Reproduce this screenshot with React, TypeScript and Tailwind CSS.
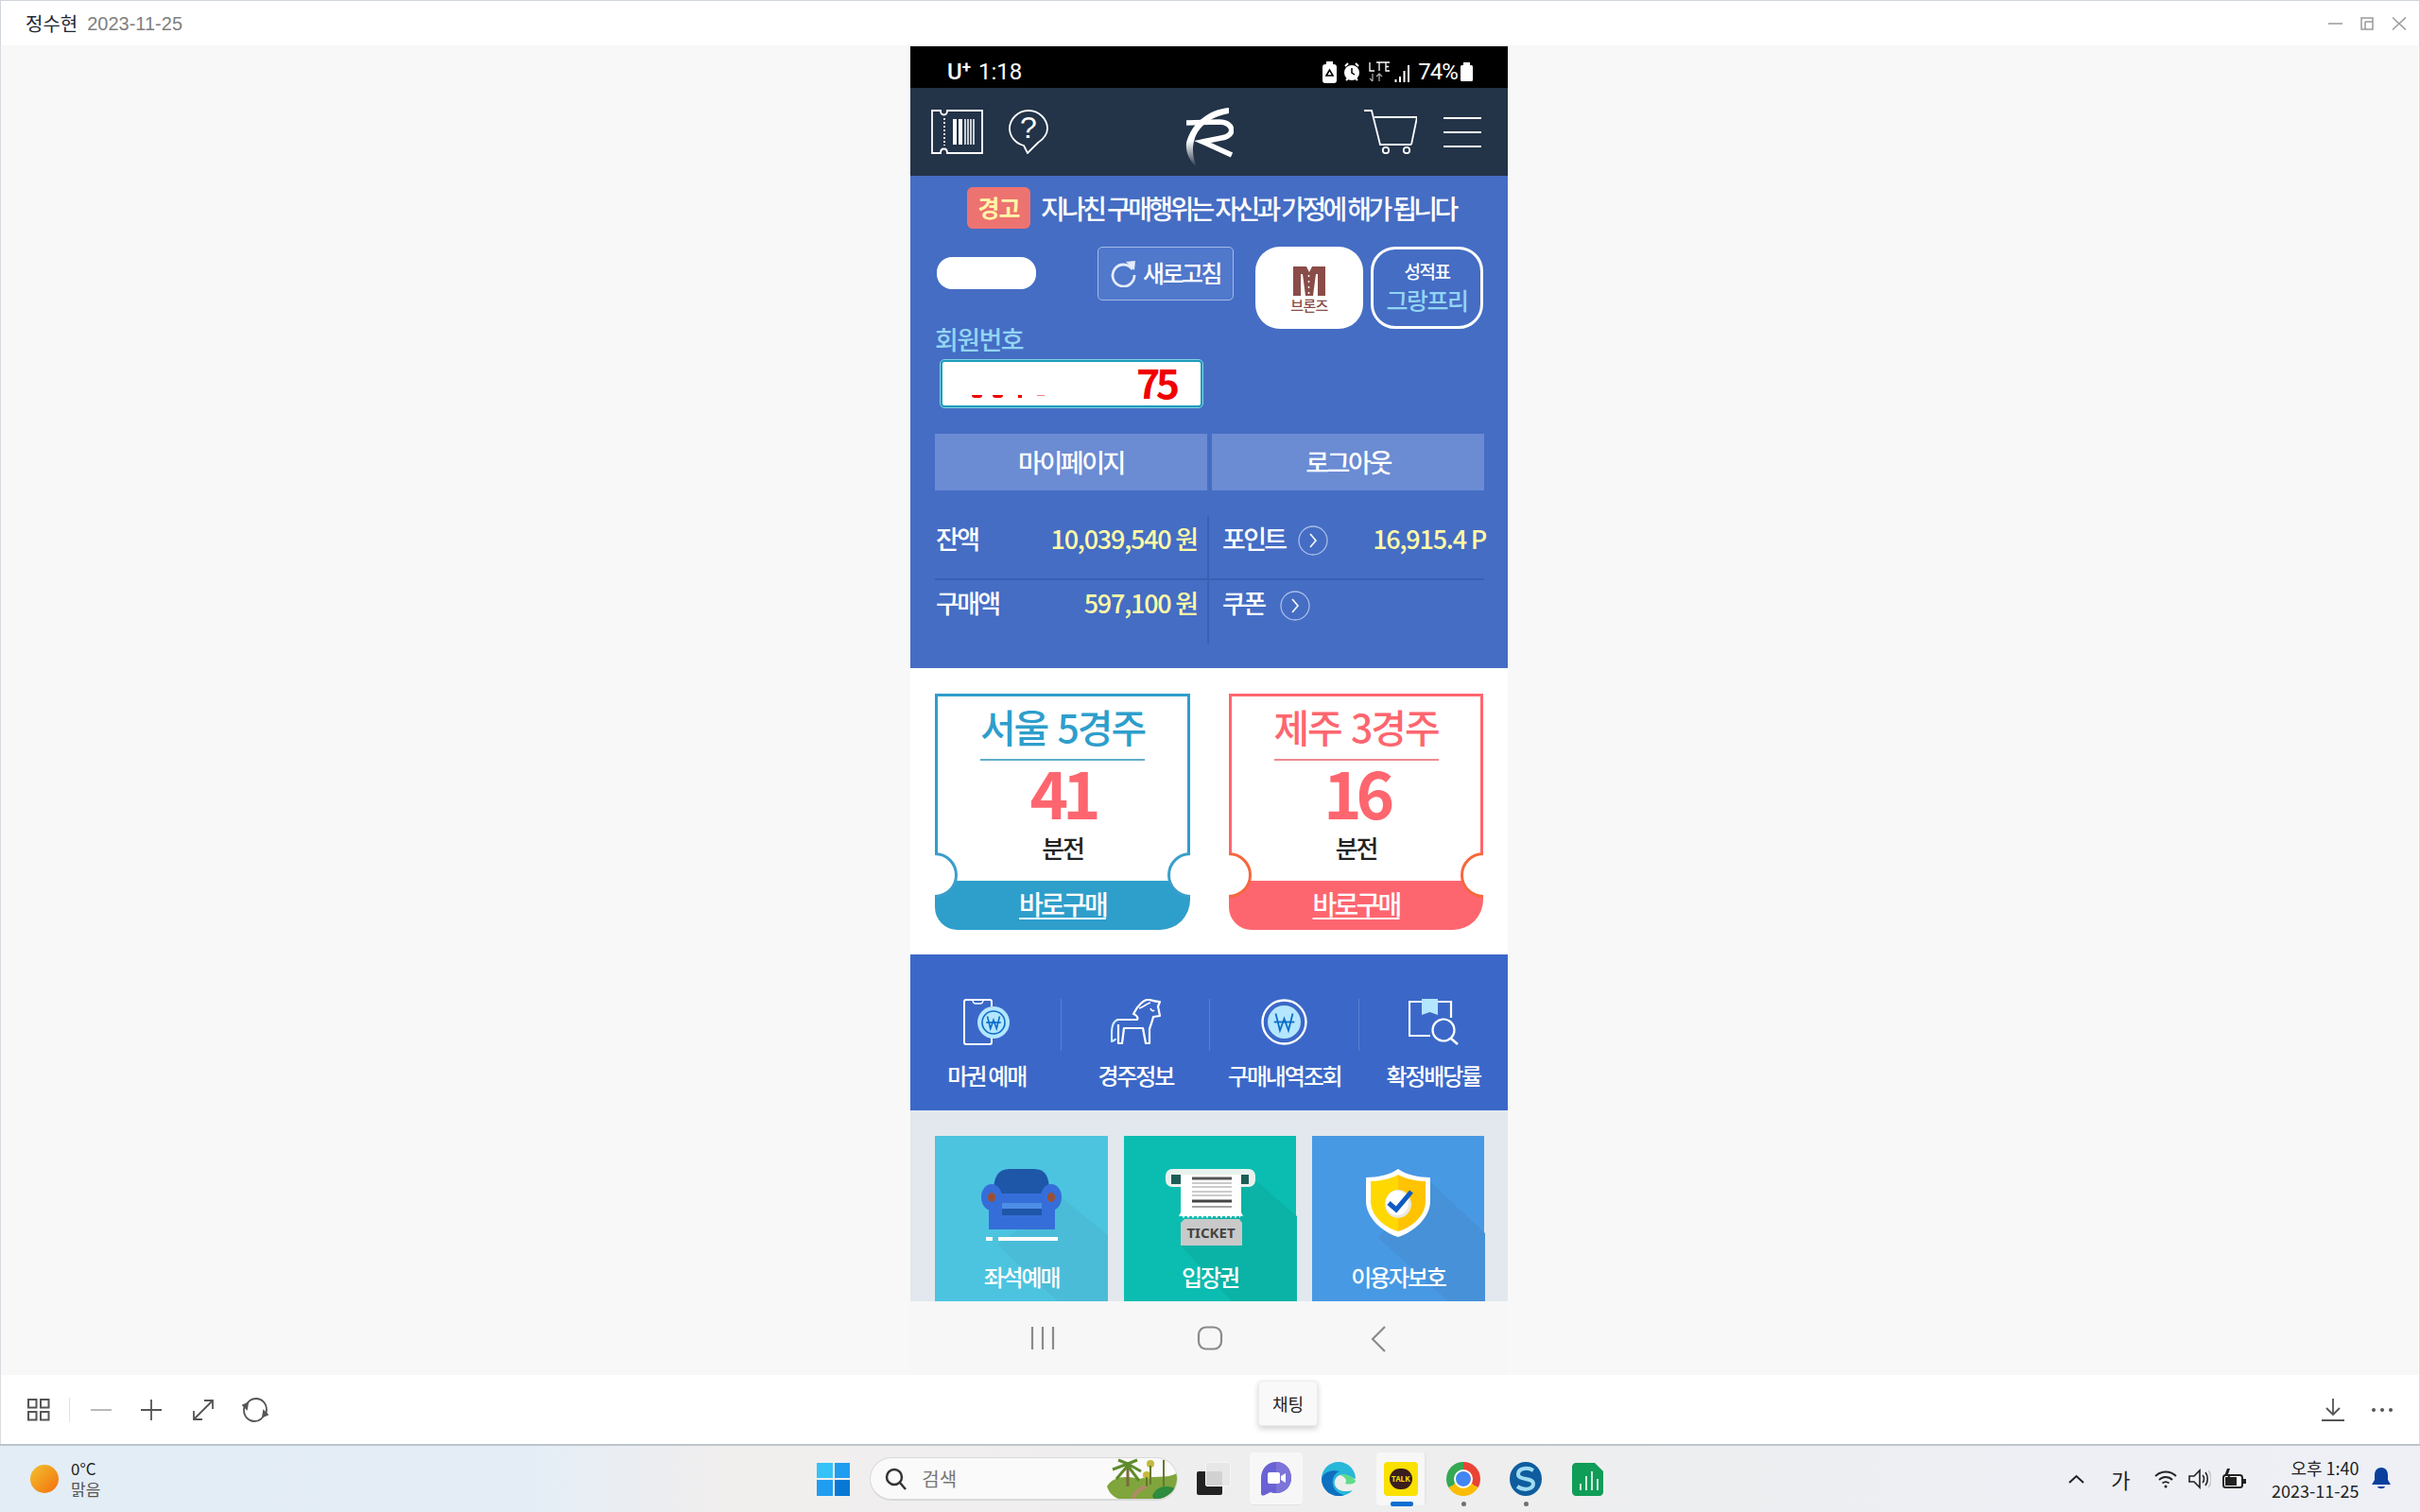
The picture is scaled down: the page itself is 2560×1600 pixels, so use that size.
import React from 'react';

// ticket card in the white band
const RaceTicket = ({ title, count, color, edge, second }: { title: string; count: string; color: string; edge: string; second?: boolean }) => {
  const borderClass = color === 'blue' ? 'border-[#2e9ecb]' : 'border-[#fe666f]';
  const textClass = color === 'blue' ? 'text-[#2e9ecb]' : 'text-[#fe666f]';
  const lineClass = color === 'blue' ? 'bg-[#62aecb]' : 'bg-[#ee8a90]';
  const stripClass = color === 'blue' ? 'bg-[#2e9ecb]' : 'bg-[#fe666f]';
  const notchClass = edge === 'blue' ? 'border-[#3a9fca]' : 'border-[#f5683f]';
  return (
    <div className={`relative flex flex-col h-[250px] overflow-hidden rounded-bl-[24px] rounded-br-[32px] ${second ? 'w-[269px]' : 'w-[270px]'}`}>
      <div className={`flex flex-col items-center h-[198px] border-[3px] border-b-0 ${borderClass}`}>
        <div className={`mt-[4px] h-[55px] leading-[55px] text-[41px] font-medium tracking-[-0.05em] [word-spacing:3px] ${textClass}`}>{title}</div>
        <div className={`w-[174px] h-[2px] mt-[7px] ${lineClass}`} />
        <div className="-mt-[2px] h-[68px] leading-[68px] text-[69px] font-bold tracking-[-0.09em] text-[#fe666f]">{count}</div>
        <div className="mt-[9px] h-[34px] leading-[34px] text-[26px] font-medium tracking-[-0.08em] text-[#222]">분전</div>
      </div>
      <div className={`flex-1 flex items-center justify-center pb-[5px] ${stripClass}`}>
        <span className="text-[28px] font-medium tracking-[-0.1em] text-white underline underline-offset-[3px]">바로구매</span>
      </div>
      <div className={`absolute left-[-24px] top-[168px] w-[48px] h-[48px] rounded-full bg-white border-[3px] ${notchClass}`} />
      <div className={`absolute right-[-24px] top-[168px] w-[48px] h-[48px] rounded-full bg-white border-[3px] ${notchClass}`} />
    </div>
  );
};

const WonMark = ({ x, y, s, w = 2 }: { x: number; y: number; s: number; w?: number }) => (
  <g stroke="#0a6cc9" strokeWidth={w} fill="none">
    <path d={`M${x - s} ${y - s}L${x - s * 0.5} ${y + s}L${x} ${y - s * 0.4}L${x + s * 0.5} ${y + s}L${x + s} ${y - s}`} />
    <path d={`M${x - s * 1.2} ${y}H${x + s * 1.2}`} />
  </g>
);

const ChevronCircle = () => (
  <svg width="32" height="32" viewBox="0 0 32 32" fill="none">
    <circle cx="16" cy="16" r="15" stroke="#a9bfe8" strokeWidth="1.3" />
    <path d="M13 9l6 7-6 7" stroke="#fff" strokeWidth="1.6" />
  </svg>
);

const MenuItem = ({ label, icon, divider }: { label: string; icon: React.ReactNode; divider?: boolean }) => (
  <div className="relative w-[158px] flex flex-col items-center">
    <div className="h-[49px] flex items-center justify-center">{icon}</div>
    <div className="mt-[16px] h-[32px] leading-[32px] text-[24px] font-medium tracking-[-0.09em] text-white whitespace-nowrap">{label}</div>
    {divider && <div className="absolute right-0 top-0 w-[1px] h-[55px] bg-[#5a7fd0]" />}
  </div>
);

const Tile = ({ label, bg, shadow, shadowColor, icon, wide }: { label: string; bg: string; shadow: string; shadowColor: string; icon: React.ReactNode; wide?: boolean }) => (
  <div className={`relative flex flex-col items-center h-[175px] ${wide ? 'w-[182px]' : 'w-[183px]'} ${bg}`}>
    <svg className="absolute inset-0" width="183" height="175" viewBox="0 0 183 175">
      <polygon points={shadow} fill={shadowColor} />
    </svg>
    <div className="relative h-[122px] pt-[35px] flex items-start justify-center">{icon}</div>
    <div className="relative mt-[11px] h-[32px] leading-[32px] text-[24px] font-medium tracking-[-0.09em] text-white">{label}</div>
  </div>
);

const App = () => {
  return (
    <div className="flex flex-col w-[2560px] h-[1600px] overflow-hidden bg-white font-['Noto_Sans_CJK_KR','Noto_Sans',sans-serif]">
      {/* viewer title bar */}
      <div className="flex items-center shrink-0 h-[48px] bg-white border-t border-l border-r border-[#cfd5db] pl-[26px]">
        <span className="text-[20px] text-[#1f2733]">정수현</span>
        <span className="ml-[10px] text-[20px] text-[#808080] font-['Liberation_Sans',sans-serif]">2023-11-25</span>
        <svg className="ml-auto mr-[13px]" width="84" height="16" viewBox="0 0 84 16" fill="none" stroke="#9a9a9a" strokeWidth="1.5">
          <path d="M1 8H16" />
          <rect x="36" y="2" width="12" height="12" />
          <path d="M40 6h8M40 6v8" />
          <path d="M69 1.5l14 13M83 1.5l-14 13" />
        </svg>
      </div>

      {/* viewer canvas with the phone capture */}
      <div className="h-[1407px] shrink-0 bg-[#f8f8f8] border-l border-r border-[#d8dce0] pt-[1px] pl-[962px]">
        <div className="flex flex-col w-[632px] h-[1406px]">
          {/* status bar */}
          <div className="flex items-center h-[44px] bg-black text-white pl-[39px] pt-[10px] font-['Roboto',sans-serif]">
            <span className="text-[24px] font-medium leading-none">U</span>
            <span className="text-[17px] font-bold leading-none mb-[9px]">+</span>
            <span className="ml-[8px] text-[24px] leading-none">1:18</span>
            <svg className="ml-[318px]" width="160" height="26" viewBox="0 0 160 26" fill="none">
              <rect x="0" y="5" width="15" height="20" rx="3" fill="#fff" />
              <rect x="4" y="2" width="7" height="4" fill="#fff" />
              <path d="M4 17l3.500-6 3.500 6z" stroke="#000" strokeWidth="1.600" />
              <circle cx="31" cy="14" r="8" fill="#fff" />
              <path d="M31 9v5l3 2" stroke="#000" strokeWidth="1.500" />
              <path d="M24 7l3-3M38 7l-3-3M25 22l2-2M37 22l-2-2" stroke="#fff" strokeWidth="2" />
              <path d="M50 3v9h5M57 3h6M60 3v9M67 3h-4M71 3h-4v9h4M67 7.500h3" stroke="#fff" strokeWidth="1.300" />
              <path d="M53 15v8M50 20l3 3M60 23v-8M57 18l3-3 3 3" stroke="#a8a8a8" strokeWidth="1.300" />
              <path d="M77.500 21v3M82 18v6M86.500 12v12M91 6v18" stroke="#fff" strokeWidth="2" />
            </svg>
            <span className="ml-[-59px] text-[24px] leading-none tracking-[-0.04em]">74%</span>
            <svg className="ml-[2px]" width="15" height="20" viewBox="0 0 15 20" fill="#fff">
              <rect x="4" y="0" width="7" height="3" />
              <rect x="1" y="3" width="13" height="17" rx="1.500" />
            </svg>
          </div>

          {/* header */}
          <div className="flex items-start h-[93px] bg-[#233348] pt-[23px]">
            <svg className="ml-[22px]" width="55" height="47" viewBox="0 0 55 47" fill="none" stroke="#fff" strokeWidth="1.800">
              <path d="M1 1H10C10 7 17 7 17 1H54V46H17C17 40 10 40 10 46H1C1 40 1 28 1 23C1 16 1 8 1 1Z" />
              <path d="M14 9V38" strokeDasharray="2 2" />
              <path d="M25 10V37M31 10V37" strokeWidth="4" />
              <path d="M36 10V37M39 10V37M42 10V37M45 10V37" strokeWidth="1.500" />
            </svg>
            <svg className="ml-[27px]" width="42" height="47" viewBox="0 0 42 47" fill="none">
              <path d="M21 1C10 1 1 10 1 20C1 29 8 36 16 38L20 46L31 35C37 31 41 26 41 20C41 10 32 1 21 1Z" stroke="#fff" strokeWidth="1.800" />
              <text x="21" y="30" textAnchor="middle" fontSize="32" fill="#fff" fontFamily="Liberation Sans">?</text>
            </svg>
            <svg className="ml-[145px] -mt-[3px]" width="51" height="64" viewBox="0 0 51 64" fill="none">
              <defs>
                <linearGradient id="swoosh" x1="0" y1="0" x2="0" y2="1">
                  <stop offset="0.55" stopColor="#fff" />
                  <stop offset="1" stopColor="#fff" stopOpacity="0" />
                </linearGradient>
              </defs>
              <path d="M46 1C24 3 6 18 1 38C0 48 4 57 12 64C7 52 7 42 10 33C15 19 29 10 46 7Z" fill="url(#swoosh)" />
              <path d="M1 17L36 16C51 16 54 31 38 33L18 37L49 51" stroke="#fff" strokeWidth="5.500" />
            </svg>
            <svg className="ml-[138px]" width="56" height="47" viewBox="0 0 56 47" fill="none" stroke="#fff" strokeWidth="1.800">
              <path d="M0 1H8L17 37H50" />
              <path d="M11 8H56L50 37" />
              <circle cx="23" cy="43" r="3.200" />
              <circle cx="45" cy="43" r="3.200" />
            </svg>
            <div className="ml-[28px] mt-[8px] flex flex-col gap-[13px]">
              <div className="w-[40px] h-[2px] bg-white" />
              <div className="w-[40px] h-[2px] bg-white" />
              <div className="w-[40px] h-[2px] bg-white" />
            </div>
          </div>

          {/* account panel */}
          <div className="h-[521px] bg-[#456dc4] pt-[12px]">
            <div className="flex items-center h-[44px] pl-[60px]">
              <div className="flex items-center justify-center w-[67px] h-[44px] rounded-[6px] bg-[#ed7370] text-[25px] font-bold text-[#fff6a8] tracking-[-0.04em]">경고</div>
              <div className="ml-[11px] text-[28px] font-medium text-white tracking-[-0.13em] [word-spacing:1px] whitespace-nowrap">지나친 구매행위는 자신과 가정에 해가 됩니다</div>
            </div>

            <div className="flex mt-[19px] pl-[26px]">
              <div className="w-[339px]">
                <div className="flex items-start h-[57px]">
                  <div className="ml-[2px] mt-[11px] w-[105px] h-[34px] rounded-[16px] bg-white" />
                  <div className="flex items-center ml-[65px] w-[144px] h-[57px] rounded-[5px] border border-[#a6bae6] bg-[#5078cb] pl-[13px] pb-[2px]">
                    <svg width="28" height="30" viewBox="0 0 28 30" fill="none">
                      <path d="M23 11A11.500 11.500 0 1 0 25 17" stroke="#e4ecfa" strokeWidth="2.800" />
                      <path d="M16 3L26 2L25 12Z" fill="#e4ecfa" />
                    </svg>
                    <span className="ml-[6px] text-[25px] font-medium text-white tracking-[-0.1em] whitespace-nowrap">새로고침</span>
                  </div>
                </div>
                <div className="mt-[21px] h-[40px] leading-[40px] text-[27px] font-medium text-[#93d4f4] tracking-[-0.06em]">회원번호</div>
                <div className="relative mt-[2px] ml-[6px] w-[277px] h-[50px] rounded-[4px] bg-[#fff] border-[2px] border-[#1f9cbb] outline outline-1 outline-[#7fd2e6]">
                  <div className="absolute left-[31px] bottom-[8px] flex gap-[11px]">
                    <div className="w-[11px] h-[3px] bg-[#f00000] rounded-b-full" />
                    <div className="w-[11px] h-[3px] bg-[#f00000] rounded-b-full" />
                    <div className="ml-[5px] w-[4px] h-[3px] bg-[#f00000]" />
                    <div className="ml-[5px] w-[8px] h-[1px] bg-[#f08080]" />
                  </div>
                  <span className="absolute left-[205px] -top-[3px] h-[46px] leading-[46px] text-[43px] font-bold tracking-[-0.11em] text-[#f00000]">75</span>
                </div>
              </div>
              <div className="flex items-start">
                <div className="flex flex-col items-center w-[114px] h-[87px] rounded-[26px] bg-white pt-[21px]">
                  <svg width="34" height="31" viewBox="0 0 34 31">
                    <path d="M0 0H14L17 6L20 0H34V31H26V8H24L21 31H13L10 8H8V31H0Z" fill="#8a4c49" />
                    <path d="M16.500 9V29" stroke="#fff" strokeWidth="1.500" strokeDasharray="2 4" />
                  </svg>
                  <span className="mt-[1px] text-[15px] leading-[18px] font-medium tracking-[-0.04em] text-[#8a4c49]">브론즈</span>
                </div>
                <div className="flex flex-col items-center ml-[8px] w-[119px] h-[87px] rounded-[26px] border-[3px] border-white pt-[11px]">
                  <span className="text-[19px] leading-[24px] font-medium text-white tracking-[-0.08em]">성적표</span>
                  <span className="mt-[3px] text-[25px] leading-[30px] font-medium text-[#93d4f4] tracking-[-0.06em]">그랑프리</span>
                </div>
              </div>
            </div>

            <div className="flex gap-[5px] mt-[28px] ml-[26px]">
              <div className="flex items-center justify-center w-[288px] h-[60px] bg-[#6b8bd3] text-[27px] font-medium text-white tracking-[-0.09em]">마이페이지</div>
              <div className="flex items-center justify-center w-[288px] h-[60px] bg-[#6b8bd3] text-[27px] font-medium text-white tracking-[-0.09em]">로그아웃</div>
            </div>

            {/* balances */}
            <div className="ml-[26px] mt-[27px] w-[581px]">
              <div className="flex h-[68px] border-b-[2px] border-[#3a60b3]">
                <div className="flex items-center w-[290px] pb-[18px] pl-[1px] pr-[10px] border-r-[2px] border-[#3a60b3]">
                  <span className="text-[27px] font-medium text-white tracking-[-0.1em]">잔액</span>
                  <span className="ml-auto text-[27px] font-medium text-[#fffba6] tracking-[-0.045em]">10,039,540 원</span>
                </div>
                <div className="flex items-center flex-1 pb-[18px] pl-[14px]">
                  <span className="text-[27px] font-medium text-white tracking-[-0.1em]">포인트</span>
                  <div className="ml-[14px] mt-[4px]"><ChevronCircle /></div>
                  <span className="ml-auto mr-[-2px] text-[27px] font-medium text-[#fffba6] tracking-[-0.045em]">16,915.4 P</span>
                </div>
              </div>
              <div className="flex h-[67px]">
                <div className="flex items-center w-[290px] pb-[18px] pl-[1px] pr-[10px] border-r-[2px] border-[#3a60b3]">
                  <span className="text-[27px] font-medium text-white tracking-[-0.1em]">구매액</span>
                  <span className="ml-auto text-[27px] font-medium text-[#fffba6] tracking-[-0.045em]">597,100 원</span>
                </div>
                <div className="flex items-center flex-1 pb-[18px] pl-[14px]">
                  <span className="text-[27px] font-medium text-white tracking-[-0.1em]">쿠폰</span>
                  <div className="ml-[17px] mt-[4px]"><ChevronCircle /></div>
                </div>
              </div>
            </div>
          </div>

          {/* race cards */}
          <div className="flex gap-[41px] h-[303px] bg-white pt-[27px] pl-[26px]">
            <RaceTicket title="서울 5경주" count="41" color="blue" edge="blue" />
            <RaceTicket title="제주 3경주" count="16" color="red" edge="red" second />
          </div>

          {/* quick menu */}
          <div className="flex h-[165px] bg-[#3b68c8] pt-[47px] pl-[2px]">
            <MenuItem
              divider
              label="마권 예매"
              icon={
                <svg width="49" height="49" viewBox="0 0 49 49" fill="none">
                  <path d="M30 8V3C30 1.500 29 1 28 1H3C1.500 1 1 2 1 3V46C1 47.500 2 48 3 48H28C29 48 30 47.500 30 46V40" stroke="#fff" strokeWidth="2" />
                  <path d="M10 1C10 4 12 5 13 5H18C19 5 21 4 21 1" stroke="#fff" strokeWidth="1.500" />
                  <ellipse cx="32" cy="25" rx="17" ry="17" fill="#b4e6ff" />
                  <circle cx="32" cy="25" r="12" stroke="#0a6cc9" strokeWidth="1.600" />
                  <WonMark x={32} y={25} s={6.500} w={1.600} />
                </svg>
              }
            />
            <MenuItem
              divider
              label="경주정보"
              icon={
                <svg width="53" height="49" viewBox="0 0 53 49" fill="none" stroke="#fff" strokeWidth="2.200" strokeLinejoin="round">
                  <path d="M6 22H28C30 18 24 16 24 16C28 7 36 0 40 1C43 1 47 3 52 3L50 8L52 18L45 19C44 24 42 28 41 32V47H37L34 31H14L12 47H8V27" />
                  <path d="M8 22C3 23 1 29 1 36L1 45C3 44 5 44 5 42" stroke="#cdeeff" />
                  <path d="M30 10C34 9 38 5 42 4M42 10C43 13 45 13 46 12" strokeWidth="1.600" />
                </svg>
              }
            />
            <MenuItem
              divider
              label="구매내역조회"
              icon={
                <svg width="49" height="49" viewBox="0 0 49 49" fill="none">
                  <circle cx="24.500" cy="24.500" r="23" stroke="#fff" strokeWidth="2.400" />
                  <circle cx="24.500" cy="24.500" r="17.500" fill="#b4e6ff" />
                  <WonMark x={24.500} y={24.500} s={9} w={1.800} />
                </svg>
              }
            />
            <MenuItem
              label="확정배당률"
              icon={
                <svg width="53" height="49" viewBox="0 0 53 49" fill="none">
                  <path d="M14 3H1V39H23" stroke="#fff" strokeWidth="2.200" />
                  <path d="M30 3H45V20" stroke="#fff" strokeWidth="2.200" />
                  <path d="M14 0H31V17L22.500 14L14 17Z" fill="#b4e6ff" />
                  <circle cx="37" cy="33" r="11.500" stroke="#fff" strokeWidth="2.200" />
                  <path d="M45 42L52 48" stroke="#fff" strokeWidth="2.600" />
                </svg>
              }
            />
          </div>

          {/* tiles */}
          <div className="flex gap-[17px] h-[202px] bg-[#e2e8ed] pt-[27px] pl-[26px]">
            <Tile
              label="좌석예매"
              bg="bg-[#4cc4e0]"
              shadow="134,65 183,105 183,175 130,175 66,115"
              shadowColor="#4abcd8"
              icon={
                <svg width="85" height="76" viewBox="0 0 85 76">
                  <path d="M13 24C13 8 18 0 30 0H56C68 0 72 8 72 24V50H13Z" fill="#1e56a8" />
                  <rect x="8" y="26" width="70" height="38" fill="#366ed9" />
                  <rect x="22" y="36" width="42" height="6" fill="#4d8fe6" />
                  <rect x="22" y="42" width="42" height="7" fill="#1e56a8" />
                  <ellipse cx="11" cy="30" rx="11" ry="14" fill="#366ed9" />
                  <ellipse cx="74" cy="30" rx="11" ry="14" fill="#366ed9" />
                  <ellipse cx="11" cy="30" rx="4" ry="5" fill="#9b5035" />
                  <ellipse cx="74" cy="30" rx="4" ry="5" fill="#9b5035" />
                  <rect x="5" y="72" width="7" height="4" fill="#fff" />
                  <rect x="18" y="72" width="63" height="4" fill="#fff" />
                </svg>
              }
            />
            <Tile
              wide
              label="입장권"
              bg="bg-[#0bbdb0]"
              shadow="137,45 183,85 183,175 114,175 59,115"
              shadowColor="#0ab3a6"
              icon={
                <svg width="95" height="81" viewBox="0 0 95 81">
                  <rect x="0" y="0" width="95" height="19" rx="7" fill="#e8f1ee" />
                  <rect x="6" y="6" width="10" height="10" fill="#1c5e57" />
                  <rect x="80" y="6" width="8" height="10" fill="#1c5e57" />
                  <path d="M16 6H80V46L82 50H14L16 46Z" fill="#fff" />
                  <path d="M28 10H70" stroke="#555" strokeWidth="3" />
                  <path d="M28 15H70M28 19H70M28 24H70M28 28H70" stroke="#bbb" strokeWidth="1.500" />
                  <path d="M28 34H70" stroke="#444" strokeWidth="3" />
                  <path d="M28 40H70" stroke="#888" strokeWidth="1.500" />
                  <path d="M18 50H79" stroke="#fff" strokeWidth="3" strokeDasharray="2 3" />
                  <path d="M20 53H78L81 57V81H16V57Z" fill="#c9c9c9" />
                  <text x="48" y="73" textAnchor="middle" fontSize="15" fontWeight="700" fill="#444" fontFamily="Noto Sans">TICKET</text>
                </svg>
              }
            />
            <Tile
              wide
              label="이용자보호"
              bg="bg-[#4899e4]"
              shadow="123,47 183,103 183,175 144,175 70,108"
              shadowColor="#4691d8"
              icon={
                <svg width="68" height="72" viewBox="0 0 68 72">
                  <path d="M34 0C42 6 56 9 68 9V34C68 52 50 67 34 72C18 67 0 52 0 34V9C12 9 26 6 34 0Z" fill="#fff" />
                  <path d="M34 6V66C20 62 5 50 5 34V13C16 13 27 10 34 6Z" fill="#ffd800" />
                  <path d="M34 6C41 10 52 13 63 13V34C63 50 48 62 34 66Z" fill="#ffc300" />
                  <ellipse cx="34" cy="37" rx="14" ry="15" fill="#e9e9e0" />
                  <ellipse cx="33" cy="36" rx="12" ry="13" fill="#fff" />
                  <path d="M24 36L32 43L48 24" stroke="#0f5bc4" strokeWidth="5" fill="none" />
                </svg>
              }
            />
          </div>

          {/* android nav */}
          <div className="flex items-start h-[78px] bg-[#f7f7f7] pt-[26px]">
            <svg className="ml-[127px]" width="26" height="26" viewBox="0 0 26 26" stroke="#8a8a8a" strokeWidth="2.200">
              <path d="M2 1V25M13 1V25M24 1V25" />
            </svg>
            <svg className="ml-[150px]" width="28" height="26" viewBox="0 0 28 26" fill="none" stroke="#8a8a8a" strokeWidth="2.200">
              <rect x="2" y="1.500" width="24" height="23" rx="8" />
            </svg>
            <svg className="ml-[156px]" width="18" height="28" viewBox="0 0 18 28" fill="none" stroke="#8a8a8a" strokeWidth="2.200">
              <path d="M15 1L2 14L15 27" />
            </svg>
          </div>
        </div>
      </div>

      {/* viewer toolbar */}
      <div className="relative flex items-center shrink-0 h-[73px] bg-white border-l border-r border-[#d8dce0] pl-[28px]">
        <svg width="24" height="24" viewBox="0 0 24 24" fill="none" stroke="#555" strokeWidth="2">
          <rect x="1" y="1" width="8.500" height="8.500" />
          <rect x="14" y="1" width="8.500" height="8.500" />
          <rect x="1" y="14" width="8.500" height="8.500" />
          <rect x="14" y="14" width="8.500" height="8.500" />
        </svg>
        <div className="ml-[20px] w-[1px] h-[26px] bg-[#e2e2e2]" />
        <div className="ml-[22px] w-[22px] h-[2px] bg-[#b9b9b9]" />
        <svg className="ml-[31px]" width="22" height="22" viewBox="0 0 22 22" stroke="#555" strokeWidth="1.800">
          <path d="M0 11H22M11 0V22" />
        </svg>
        <svg className="ml-[32px]" width="24" height="24" viewBox="0 0 24 24" fill="none" stroke="#555" strokeWidth="1.800">
          <path d="M2 22L22 2M13 2H22V11M2 13V22H11" />
        </svg>
        <svg className="ml-[29px]" width="28" height="28" viewBox="0 0 28 28" fill="none" stroke="#555" strokeWidth="1.800">
          <path d="M4 10C6 5 10 2 15 2C21 2 26 7 26 14C26 15 26 16 25 18" />
          <path d="M24 18C22 23 18 26 13 26C7 26 2 21 2 14C2 13 2 12 3 10" />
          <path d="M1 9L6 7L5 13Z" fill="#555" />
          <path d="M27 19L22 21L23 15Z" fill="#555" />
        </svg>
        <div className="absolute left-[1330px] top-[6px] flex items-center justify-center w-[63px] h-[48px] rounded-[4px] bg-[#f9f9f9] border border-[#ececec] shadow-[0_3px_6px_rgba(0,0,0,0.18)] text-[18px] text-[#222]">채팅</div>
        <svg className="ml-auto" width="24" height="24" viewBox="0 0 24 24" fill="none" stroke="#555" strokeWidth="1.800">
          <path d="M12 0V17M5 10L12 17L19 10M0 23H24" />
        </svg>
        <div className="ml-[29px] mr-[28px] flex gap-[5px]">
          <div className="w-[4px] h-[4px] rounded-full bg-[#555]" />
          <div className="w-[4px] h-[4px] rounded-full bg-[#555]" />
          <div className="w-[4px] h-[4px] rounded-full bg-[#555]" />
        </div>
      </div>

      {/* windows taskbar */}
      <div className="flex items-center shrink-0 h-[72px] border-t-[2px] border-[#bcc4cb] bg-[linear-gradient(90deg,#e3edf6_0%,#e4edf6_22%,#f1eeee_30%,#eeeeee_60%,#edeff4_85%,#eef0f6_100%)]">
        <div className="ml-[32px] w-[30px] h-[30px] rounded-full bg-[linear-gradient(135deg,#f2c230,#f46f0c)]" />
        <div className="ml-[13px] flex flex-col">
          <span className="text-[17px] leading-[22px] text-[#222]">0°C</span>
          <span className="text-[17px] leading-[22px] text-[#555]">맑음</span>
        </div>

        <div className="ml-[758px] grid grid-cols-2 gap-[2px] w-[35px] h-[35px]">
          <div className="bg-[#35c3f7]" />
          <div className="bg-[#1f9df0]" />
          <div className="bg-[#1f9df0]" />
          <div className="bg-[#0878d4]" />
        </div>

        <div className="flex items-center ml-[21px] w-[326px] h-[46px] rounded-full bg-[#fafafa] border border-b-2 border-[#d9d9d9] pl-[15px] overflow-hidden">
          <svg width="24" height="24" viewBox="0 0 24 24" fill="none" stroke="#333" strokeWidth="2.500">
            <circle cx="10" cy="10" r="8" />
            <path d="M16 16L22 23" />
          </svg>
          <span className="ml-[15px] text-[20px] text-[#777]">검색</span>
          <svg className="ml-auto" width="76" height="44" viewBox="0 0 76 44">
            <path d="M2 30C8 20 20 18 36 22C50 18 66 22 76 16V44H18C8 42 4 36 2 30Z" fill="#7fa53c" />
            <path d="M30 44C30 36 38 32 44 30" stroke="#b08a66" strokeWidth="4" fill="none" />
            <path d="M24 4V30" stroke="#7d6a3a" strokeWidth="3" />
            <path d="M24 6L8 12M24 6L38 14M24 6L14 2M24 6L34 2M24 8L12 22M24 8L36 24" stroke="#5f8b2c" strokeWidth="3" />
            <circle cx="48" cy="6" r="4" fill="#c4b93d" />
            <circle cx="44" cy="18" r="4" fill="#c4b93d" />
            <path d="M48 8V28M44 20V30M62 2V30" stroke="#66782f" strokeWidth="2" />
            <path d="M50 40C54 30 64 28 74 32V44H52Z" fill="#2f8b3d" />
          </svg>
        </div>

        <div className="relative ml-[20px] w-[36px] h-[36px]">
          <div className="absolute left-[0px] top-[10px] w-[27px] h-[25px] rounded-[2px] bg-[#222]" />
          <div className="absolute left-[9px] top-[0px] w-[27px] h-[26px] rounded-[2px] bg-[#e6e6e6]/90 border border-[#f5f5f5]" />
        </div>

        <div className="flex items-center justify-center ml-[20px] w-[56px] h-[56px] rounded-[4px] bg-[#f7f7f7] border-b border-[#e2e2e2]">
          <svg width="34" height="36" viewBox="0 0 34 36">
            <path d="M17 0C8 0 1 7 1 17V33C1 36 3 36 5 35L11 32C13 33 15 33 17 33C26 33 33 26 33 17C33 7 26 0 17 0Z" fill="#6a62d4" />
            <path d="M17 0C26 0 33 7 33 17C33 26 26 33 17 33Z" fill="#7c74d8" />
            <rect x="8" y="11" width="13" height="12" rx="2" fill="#fff" />
            <path d="M22 15L27 12V22L22 19Z" fill="#fff" />
          </svg>
        </div>

        <svg className="ml-[20px]" width="36" height="36" viewBox="0 0 36 36">
          <path d="M18 0C8 0 0 8 0 18C0 28 8 36 18 36C24 36 29 34 33 30C27 32 16 32 14 24C13 20 15 16 19 14C24 12 30 16 36 18C36 8 28 0 18 0Z" fill="#27b7d9" />
          <path d="M0 18C0 28 8 36 18 36C20 36 22 36 24 35C16 34 10 26 12 18C13 14 16 11 19 10C12 8 2 10 0 18Z" fill="#0f6fc0" />
          <path d="M19 14C25 12 32 14 36 20C35 24 30 24 25 23C28 19 24 15 19 14Z" fill="#5fdc8a" />
        </svg>

        <div className="relative flex items-center justify-center ml-[22px] w-[51px] h-[56px] rounded-[4px] bg-[#f7f7f7] shadow-[3px_0_0_-1px_#e7e7e7]">
          <div className="flex items-center justify-center w-[36px] h-[36px] rounded-[4px] bg-[#fae100]">
            <span className="flex items-center justify-center w-[24px] h-[22px] rounded-full bg-[#3a1d1d] text-[8px] font-bold text-[#fae100]">TALK</span>
          </div>
          <div className="absolute bottom-[-1px] left-[15px] w-[24px] h-[5px] rounded-[2px] bg-[#0a6fd1]" />
        </div>

        <div className="relative ml-[23px] w-[36px] h-[36px]">
          <div className="w-[36px] h-[36px] rounded-full bg-[conic-gradient(#ea4335_0deg_120deg,#fbbc04_120deg_240deg,#34a853_240deg_360deg)]" />
          <div className="absolute left-[10px] top-[10px] w-[16px] h-[16px] rounded-full bg-[#4285f4] outline outline-[2px] outline-white" />
          <div className="absolute left-[16px] top-[42px] w-[5px] h-[5px] rounded-full bg-[#707070]" />
        </div>

        <div className="relative ml-[31px] w-[34px] h-[36px]">
          <svg width="34" height="36" viewBox="0 0 34 36" fill="none">
            <ellipse cx="17" cy="18" rx="17" ry="18" fill="#0f5d9e" />
            <path d="M25 9C18 5 9 7 9 13C9 20 25 16 25 23C25 29 15 31 8 26" stroke="#9fdcf2" strokeWidth="4" />
          </svg>
          <div className="absolute left-[15px] top-[42px] w-[5px] h-[5px] rounded-full bg-[#707070]" />
        </div>

        <svg className="ml-[32px]" width="33" height="35" viewBox="0 0 33 35">
          <path d="M4 0H24L33 9V31C33 33 31 35 29 35H4C2 35 0 33 0 31V4C0 2 2 0 4 0Z" fill="#0f9d58" />
          <path d="M9 29V22M15 29V14M21 29V9M27 29V17" stroke="#cfeedd" strokeWidth="2" />
        </svg>

        {/* tray */}
        <svg className="ml-[492px]" width="17" height="10" viewBox="0 0 17 10" fill="none" stroke="#222" strokeWidth="2">
          <path d="M1 9L8.500 2L16 9" />
        </svg>
        <span className="ml-[28px] text-[22px] text-[#222]">가</span>
        <svg className="ml-[25px]" width="24" height="20" viewBox="0 0 24 20" fill="none" stroke="#222" strokeWidth="1.800">
          <path d="M1 7C7 1 17 1 23 7M5 11C9 7 15 7 19 11M8.500 14.500C10.500 13 13.500 13 15.500 14.500" />
          <circle cx="12" cy="18" r="1.500" fill="#222" stroke="none" />
        </svg>
        <svg className="ml-[12px]" width="24" height="22" viewBox="0 0 24 22" fill="none" stroke="#222" strokeWidth="1.600">
          <path d="M1 8H6L12 2V20L6 14H1Z" />
          <path d="M15 7C17 9 17 13 15 15M18 4C21 8 21 14 18 18" />
          <path d="M21 2C25 7 25 15 21 20" stroke="#c8c8c8" />
        </svg>
        <svg className="ml-[12px]" width="25" height="22" viewBox="0 0 25 22">
          <rect x="1" y="7" width="20" height="13" rx="2.500" fill="#fff" stroke="#222" strokeWidth="2" />
          <rect x="3" y="9" width="12" height="9" fill="#222" />
          <rect x="22" y="11" width="3" height="5" fill="#222" />
          <path d="M5 0L2 8H6L4 13L10 6H6L8 0Z" fill="#222" />
        </svg>
        <div className="ml-[1px] flex flex-col items-end w-[119px] text-[18px] leading-[24px] text-[#222]">
          <span>오후 1:40</span>
          <span>2023-11-25</span>
        </div>
        <svg className="ml-[13px]" width="20" height="24" viewBox="0 0 20 24" fill="#0a3f9e">
          <path d="M10 0C5 0 3 4 3 8V13L0 18H20L17 13V8C17 4 15 0 10 0Z" />
          <path d="M6 20H14C13 23 7 23 6 20Z" />
        </svg>
      </div>
    </div>
  );
};

export default App;
